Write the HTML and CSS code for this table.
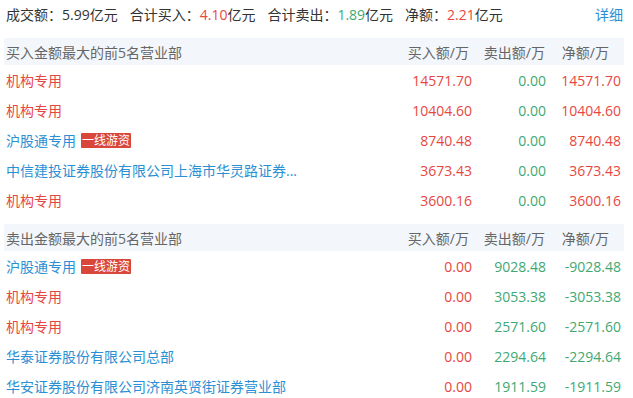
FILE: index.html
```html
<!DOCTYPE html>
<html lang="zh">
<head>
<meta charset="utf-8">
<link rel="stylesheet" href="styles.css">
</head>
<body>
<div class="page">
  <div class="summary">
    <span class="item">成交额：5.99亿元</span>
    <span class="item">合计买入：<span class="up">4.10</span>亿元</span>
    <span class="item">合计卖出：<span class="down">1.89</span>亿元</span>
    <span class="item">净额：<span class="up">2.21</span>亿元</span>
    <a class="detail">详细</a>
  </div>

  <div class="table">
    <div class="row head">
      <div class="name">买入金额最大的前5名营业部</div>
      <div class="num h-buy">买入额/万</div>
      <div class="num h-sell">卖出额/万</div>
      <div class="num h-net">净额/万</div>
    </div>
    <div class="row"><div class="name inst">机构专用</div><div class="num up">14571.70</div><div class="num down">0.00</div><div class="num net up">14571.70</div></div>
    <div class="row"><div class="name inst">机构专用</div><div class="num up">10404.60</div><div class="num down">0.00</div><div class="num net up">10404.60</div></div>
    <div class="row"><div class="name">沪股通专用<span class="badge">一线游资</span></div><div class="num up">8740.48</div><div class="num down">0.00</div><div class="num net up">8740.48</div></div>
    <div class="row"><div class="name">中信建投证券股份有限公司上海市华灵路证券...</div><div class="num up">3673.43</div><div class="num down">0.00</div><div class="num net up">3673.43</div></div>
    <div class="row"><div class="name inst">机构专用</div><div class="num up">3600.16</div><div class="num down">0.00</div><div class="num net up">3600.16</div></div>
  </div>

  <div class="table second">
    <div class="row head">
      <div class="name">卖出金额最大的前5名营业部</div>
      <div class="num h-buy">买入额/万</div>
      <div class="num h-sell">卖出额/万</div>
      <div class="num h-net">净额/万</div>
    </div>
    <div class="row"><div class="name">沪股通专用<span class="badge">一线游资</span></div><div class="num up">0.00</div><div class="num down">9028.48</div><div class="num net down">-9028.48</div></div>
    <div class="row"><div class="name inst">机构专用</div><div class="num up">0.00</div><div class="num down">3053.38</div><div class="num net down">-3053.38</div></div>
    <div class="row"><div class="name inst">机构专用</div><div class="num up">0.00</div><div class="num down">2571.60</div><div class="num net down">-2571.60</div></div>
    <div class="row"><div class="name">华泰证券股份有限公司总部</div><div class="num up">0.00</div><div class="num down">2294.64</div><div class="num net down">-2294.64</div></div>
    <div class="row"><div class="name">华安证券股份有限公司济南英贤街证券营业部</div><div class="num up">0.00</div><div class="num down">1911.59</div><div class="num net down">-1911.59</div></div>
  </div>
</div>
</body>
</html>
```

FILE: styles.css
```css
html, body {
  margin: 0;
  padding: 0;
  background: #ffffff;
}
body {
  font-family: "Open Sans", "Noto Sans CJK SC", sans-serif;
  font-size: 14px;
  color: #333333;
}
.page {
  width: 620px;
  padding: 0 9px 0 4px;
}
.summary {
  display: flex;
  align-items: center;
  height: 27px;
  padding-left: 2px;
  margin-bottom: 11px;
  white-space: nowrap;
}
.summary .item {
  margin-right: 12px;
}
.detail {
  margin-left: auto;
  margin-right: 1px;
  color: #2b8fd3;
  cursor: pointer;
}
.up {
  color: #e8473f;
}
.down {
  color: #3fa873;
}
.table.second {
  margin-top: 9px;
}
.row {
  display: grid;
  grid-template-columns: 1fr 90px 74px 78px;
  align-items: center;
  height: 30px;
}
.row.head {
  height: 27px;
  background: #f3f6fa;
  color: #666666;
}
.name {
  padding-left: 2px;
  color: #2b8fd3;
  white-space: nowrap;
  display: flex;
  align-items: center;
}
.row.head .name {
  color: #666666;
}
.name.inst {
  color: #e8473f;
}
.num {
  text-align: right;
  white-space: nowrap;
}
.num.net {
  padding-right: 3px;
}
.h-buy {
  padding-right: 3px;
}
.h-sell {
  padding-right: 1px;
}
.h-net {
  padding-right: 15px;
}
.badge {
  display: inline-block;
  margin-left: 5px;
  padding: 0 1px;
  height: 15px;
  line-height: 15px;
  font-size: 12px;
  background: #d9473a;
  color: #ffffff;
  border-radius: 1px;
}
```
